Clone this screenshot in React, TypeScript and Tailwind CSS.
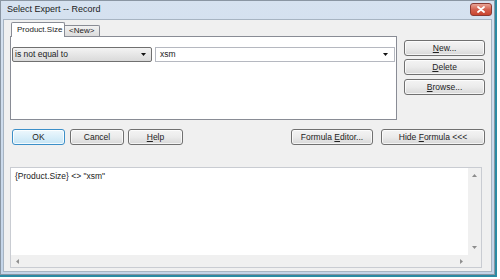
import type { ReactNode } from "react";

const btn =
  "flex items-center justify-center h-4 rounded-[3px] border border-[#707070] bg-gradient-to-b from-[#f4f4f4] via-[#ebebeb] to-[#d8d8d8] shadow-[inset_0_0_0_1px_rgba(255,255,255,0.7)] text-[8.5px] text-[#222] leading-none";

function Btn({ className, children }: { className: string; children: ReactNode }) {
  return <div className={`${btn} ${className}`}>{children}</div>;
}

function Arrow({ dir }: { dir: "up" | "down" | "left" | "right" }) {
  const pts = {
    up: "0,4 3.5,0 7,4",
    down: "0,0 3.5,4 7,0",
    left: "4,0 0,3.5 4,7",
    right: "0,0 4,3.5 0,7",
  }[dir];
  const vert = dir === "up" || dir === "down";
  return (
    <svg width={vert ? 5 : 3} height={vert ? 3 : 5} viewBox={vert ? "0 0 7 4" : "0 0 4 7"}>
      <polygon points={pts} fill="#8c8c8c" />
    </svg>
  );
}

export default function App() {
  return (
    <div className="w-[500px] h-[279px] bg-white font-['Liberation_Sans',Arial,sans-serif]">
      <div className="w-[497px] h-[277px] border-r-2 border-b-2 border-[#2a8aa3]">
        <div className="w-full h-full flex flex-col border border-[#8a96a3] bg-gradient-to-b from-[#d6e2f0] to-[#c3d4e8]">
          {/* title bar */}
          <div className="h-[18px] flex items-center justify-between pl-[6px] pr-[2px]">
            <span className="text-[9px] text-[#1c1c1c]">Select Expert -- Record</span>
            <div className="w-[22px] h-[13px] mb-[2px] rounded-[3px] border border-[#8a3b34] bg-gradient-to-b from-[#e8a496] via-[#d3614f] to-[#c9432e] flex items-center justify-center">
              <svg width="8" height="7" viewBox="0 0 8 7">
                <path d="M1 1 L7 6 M7 1 L1 6" stroke="white" strokeWidth="1.8" strokeLinecap="round" />
              </svg>
            </div>
          </div>

          {/* client area */}
          <div className="flex-1 mx-[2px] mb-[2px] bg-[#f0f0f0] border border-[#a7b4c2] px-[6px] pt-[2px] flex flex-col">
            <div className="flex gap-[7px]">
              <div className="w-[388px] flex flex-col">
                <div className="flex items-end h-[14px] pl-[1px]">
                  <div className="relative z-10 -mb-px h-[15px] w-[54px] bg-white border border-b-0 border-[#898c95] rounded-t-[2px] flex items-center pl-[5px] text-[8px] text-[#222]">
                    Product.Size
                  </div>
                  <div className="h-[11px] w-[35px] border border-b-0 border-l-0 border-[#898c95] rounded-tr-[2px] bg-gradient-to-b from-[#f2f2f2] to-[#dcdcdc] flex items-center pl-[4px] text-[8px] text-[#222]">
                    &lt;New&gt;
                  </div>
                </div>
                <div className="h-[84px] bg-white border border-[#898c95] px-[1px] pt-[10px]">
                  <div className="flex gap-[3px]">
                    <div className="w-[140px] h-[15px] rounded-[2px] border border-[#707070] bg-gradient-to-b from-[#f3f3f3] to-[#dadada] flex items-center justify-between pl-[2px] pr-[5px] text-[8.5px] text-[#222]">
                      <span>is not equal to</span>
                      <svg width="5" height="3" viewBox="0 0 5 3">
                        <polygon points="0,0 5,0 2.5,3" fill="#111" />
                      </svg>
                    </div>
                    <div className="w-[240px] h-[15px] border border-[#b5b8c0] bg-white flex items-center justify-between pl-[4px] pr-[6px] text-[8.5px] text-[#222]">
                      <span>xsm</span>
                      <svg width="5" height="3" viewBox="0 0 5 3">
                        <polygon points="0,0 5,0 2.5,3" fill="#111" />
                      </svg>
                    </div>
                  </div>
                </div>
              </div>
              <div className="w-[81px] pt-[18px] flex flex-col gap-[3px]">
                <Btn className="w-full">
                  <span><u>N</u>ew...</span>
                </Btn>
                <Btn className="w-full">
                  <span><u>D</u>elete</span>
                </Btn>
                <Btn className="w-full mt-[1px]">
                  <span><u>B</u>rowse...</span>
                </Btn>
              </div>
            </div>

            {/* buttons row */}
            <div className="mt-[9px] flex items-center">
              <div className="w-[53px] ml-[2px] flex items-center justify-center h-4 rounded-[3px] border border-[#3c8fc8] bg-gradient-to-b from-[#eef8fd] to-[#c6e5f5] shadow-[inset_0_0_0_1px_rgba(255,255,255,0.8)] text-[8.5px] text-[#222] leading-none">
                OK
              </div>
              <Btn className="w-[54px] ml-[5px]">Cancel</Btn>
              <Btn className="w-[55px] ml-[4px]">
                <span><u>H</u>elp</span>
              </Btn>
              <Btn className="w-[82px] ml-auto">
                <span>Formula <u>E</u>ditor...</span>
              </Btn>
              <Btn className="w-[104px] ml-[8px]">
                <span>Hide <u>F</u>ormula &lt;&lt;&lt;</span>
              </Btn>
            </div>

            {/* formula text area */}
            <div className="mt-[22px] w-[472px] h-[101px] border border-[#c9ccd2] bg-[#f0f0f0] flex flex-col">
              <div className="flex-1 flex">
                <div className="flex-1 bg-white pl-[4px] pt-[2px] text-[8.5px] text-[#222]">
                  {"{Product.Size} <> \"xsm\""}
                </div>
                <div className="w-[13px] flex flex-col items-center justify-between py-[6px]">
                  <Arrow dir="up" />
                  <Arrow dir="down" />
                </div>
              </div>
              <div className="h-[12px] flex items-center">
                <div className="flex-1 flex items-center justify-between px-[5px]">
                  <Arrow dir="left" />
                  <Arrow dir="right" />
                </div>
                <div className="w-[13px]" />
              </div>
            </div>
          </div>
        </div>
      </div>
    </div>
  );
}
